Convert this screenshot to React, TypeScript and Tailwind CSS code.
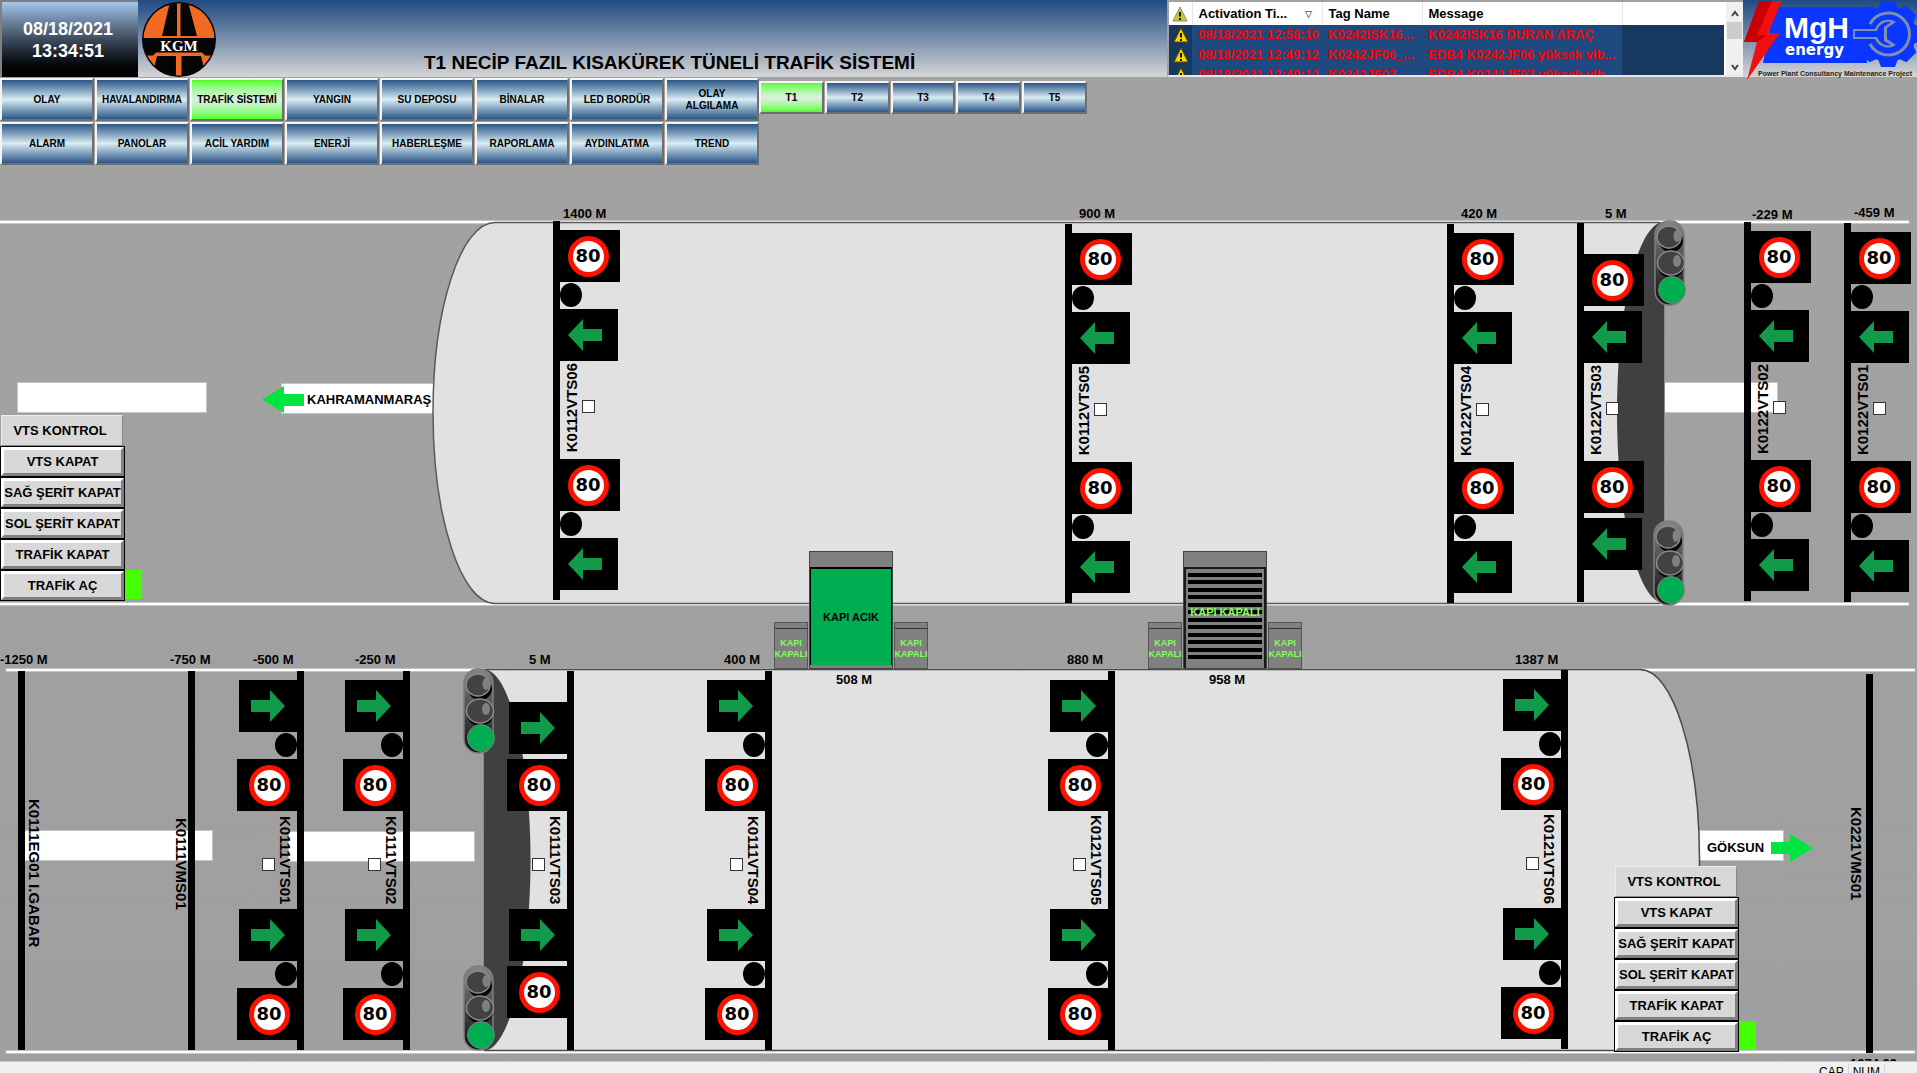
import type { ReactNode } from "react";

type Direction = "left" | "right";

interface IGantry {
  tag: string;
  x: number;
  y: number;
  portal?: boolean;
}

const menuItems = [
  "OLAY", "HAVALANDIRMA", "TRAFİK SİSTEMİ", "YANGIN", "SU DEPOSU", "BİNALAR", "LED BORDÜR", "OLAY ALGILAMA",
  "ALARM", "PANOLAR", "ACİL YARDIM", "ENERJİ", "HABERLEŞME", "RAPORLAMA", "AYDINLATMA", "TREND",
];

const tunnels = ["T1", "T2", "T3", "T4", "T5"];

const alarms = [
  { time: "08/18/2021 12:58:10", tag: "K0242ISK16...", message: "K0242ISK16 DURAN ARAÇ" },
  { time: "08/18/2021 12:49:12", tag: "K0242JF06_...", message: "EDB4 K0242JF06 yüksek vib..." },
  { time: "08/18/2021 12:49:12", tag: "K0242JF07_...", message: "EDB4 K0242JF07 yüksek vib..." },
];

// x / y are the top left corner on the map
const leftboundGantries: IGantry[] = [
  { tag: "K0112VTS06", x: 553, y: 56 },
  { tag: "K0112VTS05", x: 1065, y: 59 },
  { tag: "K0122VTS04", x: 1447, y: 59 },
  { tag: "K0122VTS03", x: 1577, y: 58, portal: true },
  { tag: "K0122VTS02", x: 1744, y: 57 },
  { tag: "K0122VTS01", x: 1844, y: 58 },
];

const rightboundGantries: IGantry[] = [
  { tag: "K0111VTS01", x: 237, y: 506 },
  { tag: "K0111VTS02", x: 343, y: 506 },
  { tag: "K0111VTS03", x: 507, y: 506, portal: true },
  { tag: "K0111VTS04", x: 705, y: 506 },
  { tag: "K0121VTS05", x: 1048, y: 506 },
  { tag: "K0121VTS06", x: 1501, y: 505 },
];

const distances = [
  { text: "1400 M", x: 563, y: 41 },
  { text: "900 M", x: 1079, y: 41 },
  { text: "420 M", x: 1461, y: 41 },
  { text: "5 M", x: 1605, y: 41 },
  { text: "-229 M", x: 1752, y: 42 },
  { text: "-459 M", x: 1854, y: 40 },
  { text: "-1250 M", x: 0, y: 487 },
  { text: "-750 M", x: 170, y: 487 },
  { text: "-500 M", x: 253, y: 487 },
  { text: "-250 M", x: 355, y: 487 },
  { text: "5 M", x: 529, y: 487 },
  { text: "400 M", x: 724, y: 487 },
  { text: "880 M", x: 1067, y: 487 },
  { text: "1387 M", x: 1515, y: 487 },
  { text: "508 M", x: 836, y: 507 },
  { text: "958 M", x: 1209, y: 507 },
];

const vtsCommands = ["VTS KAPAT", "SAĞ ŞERİT KAPAT", "SOL ŞERİT KAPAT", "TRAFİK KAPAT", "TRAFİK AÇ"];

function Pin({ x, y, children }: { x: number; y: number; children: ReactNode }) {
  return (
    <div className="absolute" style={{ left: x, top: y }}>
      {children}
    </div>
  );
}

function KgmLogo() {
  return (
    <svg viewBox="0 0 74 75" className="ml-1 mt-0.5 h-[75px] w-[74px] shrink-0" role="img" aria-label="KGM">
      <defs>
        <clipPath id="kgm">
          <ellipse cx="37" cy="37.500" rx="35.500" ry="36" />
        </clipPath>
      </defs>
      <ellipse cx="37" cy="37.500" rx="37" ry="37.500" fill="#050505" />
      <g clipPath="url(#kgm)">
        <rect width="74" height="36" fill="#f26a22" />
        <path d="M28 0H46L55 34H20Z" fill="#050505" />
        <rect x="35" width="3.500" height="35" fill="#f26a22" />
        <path d="M14 50.500H60L63 53.500H74L62 66L59 54H15L12 66L0 53.500H11Z" fill="#f26a22" />
        <rect x="34" y="51" width="5.500" height="24" fill="#f26a22" />
      </g>
      <text x="37" y="49" textAnchor="middle" fill="#fff" fontSize="15" fontWeight="700" fontFamily="'Liberation Serif', serif">
        KGM
      </text>
    </svg>
  );
}

function MghLogo() {
  const teeth = [0, 45, 90, 135, 180, 225, 270, 315];
  return (
    <svg viewBox="0 0 174 81" className="h-[81px] w-[174px] shrink-0" role="img" aria-label="MgH energy">
      <path d="M31 7H124V63H20Z" fill="#0a36ff" />
      <g fill="#0a36ff">
        <circle cx="145" cy="34" r="28" />
        {teeth.map((angle) => (
          <path key={angle} d="M135 9L138 1H152L155 9Z" transform={`rotate(${angle} 145 34)`} />
        ))}
      </g>
      <path d="M127 24A21 21 0 1 1 127 44" fill="none" stroke="#7e8fb0" strokeWidth="3" />
      <path d="M110 29H132A14 14 0 0 1 153 22L144 28V39L153 45A14 14 0 0 1 132 39H110Z" fill="#7e8fb0" />
      <path d="M112 31H134A12 12 0 0 1 148 22L141 27V41L148 45A12 12 0 0 1 134 37H112Z" fill="#0a36ff" />
      <path d="M16 1H39L25 33H37L4 80L14 42H1Z" fill="#f01010" />
      <path d="M16 1H29L14 35H24L14 42H1Z" fill="#c80000" />
      <text x="41" y="38" fontSize="30" fontWeight="700" fill="#fff" fontFamily="'Liberation Sans', sans-serif">MgH</text>
      <text x="42" y="55" fontSize="15" fontWeight="700" fill="#fff" fontFamily="'DejaVu Sans', sans-serif">energy</text>
      <text x="15" y="76" fontSize="7" fontWeight="700" fill="#222" fontFamily="'Liberation Sans', sans-serif">
        Power Plant Consultancy Maintenance Project
      </text>
    </svg>
  );
}

function WarningIcon({ dim = false }: { dim?: boolean }) {
  return (
    <svg viewBox="0 0 16 16" className="mx-auto block size-4">
      <path d="M8 1L15 15H1Z" fill={dim ? "#c9cc1e" : "#ffd500"} stroke={dim ? "#8a8a8a" : "#5a4a00"} />
      <path d="M8 6V10.500M8 12V14" stroke="#111" strokeWidth="2" />
    </svg>
  );
}

function AlarmList() {
  return (
    <div className="flex h-[77px] w-[576px] shrink-0 border-2 border-r-0 border-[#a0a0a0] border-b-[#e8e8e8] bg-[#17385f]">
      <div className="min-w-0 flex-1 overflow-hidden">
        <table className="w-full table-fixed border-collapse text-left text-[13px] leading-5">
          <colgroup>
            <col className="w-[23px]" />
            <col className="w-[130px]" />
            <col className="w-[100px]" />
            <col className="w-[200px]" />
            <col />
          </colgroup>
          <thead>
            <tr className="h-[23px] bg-white text-black">
              <th className="border-r border-gray-200"><WarningIcon dim /></th>
              <th className="whitespace-nowrap border-r border-gray-200 px-1.5 font-bold">
                <span className="flex justify-between pr-1">
                  Activation Ti...
                  <span className="text-[9px] text-gray-500">▽</span>
                </span>
              </th>
              <th className="border-r border-gray-200 px-1.5 font-bold">Tag Name</th>
              <th className="border-r border-gray-200 px-1.5 font-bold">Message</th>
              <th></th>
            </tr>
          </thead>
          <tbody>
            {alarms.map((alarm) => (
              <tr key={alarm.tag} className="h-5 whitespace-nowrap text-[#ff0000]">
                <td><WarningIcon /></td>
                <td className="bg-[#1f4a7f] px-1.5 font-bold">{alarm.time}</td>
                <td className="bg-[#1f4a7f] px-1.5 font-bold">{alarm.tag}</td>
                <td className="bg-[#1f4a7f] px-1.5 font-bold">{alarm.message}</td>
                <td></td>
              </tr>
            ))}
          </tbody>
        </table>
      </div>
      <div className="flex w-[19px] flex-col items-center border-l-2 border-white bg-[#f0f0f0] py-1">
        <svg viewBox="0 0 8 8" className="mt-1 size-2"><path d="M1 6L4 2L7 6" fill="none" stroke="#444" strokeWidth="2" /></svg>
        <div className="mt-1 h-[17px] w-[15px] bg-[#cdcdcd]" />
        <svg viewBox="0 0 8 8" className="mt-auto size-2"><path d="M1 2L4 6L7 2" fill="none" stroke="#444" strokeWidth="2" /></svg>
      </div>
    </div>
  );
}

function Header() {
  return (
    <header className="flex h-[77px] bg-linear-to-b from-[#204a80] to-[#d6d6d6]">
      <div className="flex w-[138px] shrink-0 flex-col items-center justify-center border-l-2 border-t-2 border-[#808080] bg-linear-to-b from-[#a5c6ee] to-black pr-1 text-lg font-bold leading-[22px] text-white">
        <span>08/18/2021</span>
        <span>13:34:51</span>
      </div>
      <KgmLogo />
      <h1 className="flex-1 whitespace-nowrap pl-[208px] pt-[51px] text-[19px] font-bold leading-6">
        T1 NECİP FAZIL KISAKÜREK TÜNELİ TRAFİK SİSTEMİ
      </h1>
      <AlarmList />
      <MghLogo />
    </header>
  );
}

function NavButton({ label, active }: { label: string; active: boolean }) {
  return (
    <button
      type="button"
      className={
        "flex h-full w-full items-center justify-center border-2 border-b-[#6e6e6e] border-l-[#f4f4f4] border-r-[#6e6e6e] border-t-[#f4f4f4] bg-linear-to-b text-center text-[10px] font-bold leading-3 " +
        (active ? "from-[#4dff0f] via-[#dcefe2] to-[#4dff0f]" : "from-[#2c5788] via-[#d9edf2] to-[#2c5788]") +
        (label === "OLAY ALGILAMA" ? " px-3" : "")
      }
    >
      {label}
    </button>
  );
}

function Navigation() {
  return (
    <nav className="flex h-[88px] items-start pt-px">
      <div className="grid w-[759px] auto-rows-[43px] grid-cols-8 gap-px">
        {menuItems.map((item) => (
          <NavButton key={item} label={item} active={item === "TRAFİK SİSTEMİ"} />
        ))}
      </div>
      <div className="mt-[3px] grid w-[328px] auto-rows-[33px] grid-cols-5 gap-px">
        {tunnels.map((tunnel) => (
          <NavButton key={tunnel} label={tunnel} active={tunnel === "T1"} />
        ))}
      </div>
    </nav>
  );
}

function SpeedSign({ direction }: { direction: Direction }) {
  return (
    <div
      className={
        "flex h-[52px] w-[60px] items-center justify-center bg-black " + (direction === "left" ? "pr-1" : "pl-1")
      }
    >
      <div className="flex size-[41px] items-center justify-center rounded-full border-[5px] border-[#ff1100] bg-white font-['DejaVu_Sans',sans-serif] text-lg font-bold leading-none">
        80
      </div>
    </div>
  );
}

function LaneArrow({ direction }: { direction: Direction }) {
  return (
    <div
      className={
        "flex h-[52px] w-[58px] items-center bg-black " + (direction === "left" ? "pl-2" : "justify-end pr-3")
      }
    >
      <svg viewBox="0 0 34 32" className={direction === "left" ? "h-8 w-[34px]" : "h-8 w-[34px] -scale-x-100"}>
        <path d="M0 16L15 0V10H34V22H15V32Z" fill="#119a49" />
      </svg>
    </div>
  );
}

function Gantry({ gantry, direction }: { gantry: IGantry; direction: Direction }) {
  const isLeft = direction === "left";
  const gap = gantry.portal ? (
    <div className="h-[5px]" />
  ) : (
    <div className="h-[27px] py-px">
      <div className="h-6 w-[22px] rounded-[50%] bg-black" />
    </div>
  );
  const lane = (
    <>
      {isLeft ? <SpeedSign direction={direction} /> : <LaneArrow direction={direction} />}
      {gap}
      {isLeft ? <LaneArrow direction={direction} /> : <SpeedSign direction={direction} />}
    </>
  );

  return (
    <div className={isLeft ? "flex h-[379px]" : "flex h-[379px] flex-row-reverse"}>
      <div className="w-[7px] bg-black" />
      <div
        className={
          "flex flex-col " + (isLeft ? "items-start " : "items-end ") + (gantry.portal ? "pt-[31px]" : "pt-[9px]")
        }
      >
        {lane}
        <div className={isLeft ? "flex h-[98px] items-center gap-0.5 pb-1 pl-1" : "flex h-[98px] flex-row-reverse items-center gap-0.5 pr-1"}>
          <label
            htmlFor={gantry.tag}
            className={
              "whitespace-nowrap text-[15px] font-bold leading-4 [writing-mode:vertical-rl] " + (isLeft ? "rotate-180" : "")
            }
          >
            {gantry.tag}
          </label>
          <input
            id={gantry.tag}
            type="checkbox"
            className={"size-[13px] appearance-none border border-[#333] bg-white " + (isLeft ? "mb-1" : "mt-2")}
          />
        </div>
        {lane}
      </div>
    </div>
  );
}

function TrafficLight() {
  return (
    <svg viewBox="0 0 32 86" className="block h-[86px] w-8">
      <defs>
        <linearGradient id="housing" x1="0" x2="0" y1="0" y2="1">
          <stop offset="0" stopColor="#858585" />
          <stop offset="0.500" stopColor="#4a4a4a" />
          <stop offset="1" stopColor="#0c0c0c" />
        </linearGradient>
      </defs>
      <rect x="1" y="1" width="29" height="84" rx="14" fill="url(#housing)" stroke="#7d7d7d" strokeWidth="1.500" />
      <ellipse cx="17" cy="21" rx="12" ry="11" fill="#050505" />
      <ellipse cx="15" cy="17" rx="12" ry="11" fill="#424242" stroke="#8c8c8c" strokeWidth="1.500" />
      <ellipse cx="23" cy="16" rx="3.500" ry="6" fill="#808080" />
      <ellipse cx="17" cy="47" rx="13" ry="11" fill="#050505" />
      <ellipse cx="17" cy="43" rx="13.500" ry="12" fill="#424242" stroke="#8c8c8c" strokeWidth="1.500" />
      <ellipse cx="23" cy="41" rx="4" ry="6" fill="#808080" />
      <circle cx="18" cy="70" r="13.500" fill="#00ae52" stroke="#7d7d7d" />
    </svg>
  );
}

function SideDoor() {
  return (
    <div className="flex h-[47px] w-[34px] flex-col border border-[#555] bg-[#808080]">
      <div className="h-1.5 shrink-0 border-b border-[#333]" />
      <div className="flex flex-1 flex-col items-center justify-center text-center text-[9px] font-bold leading-[11px] text-[#80ff55]">
        <span>KAPI</span>
        <span>KAPALI</span>
      </div>
    </div>
  );
}

function CrossPassage({ open }: { open: boolean }) {
  return (
    <div className="flex items-end gap-px">
      <SideDoor />
      <div className="flex h-[118px] w-[84px] flex-col border border-[#444] bg-[#808080]">
        <div className="h-[15px] shrink-0" />
        {open ? (
          <div className="mb-[3px] flex flex-1 items-center justify-center border-x border-t-2 border-black bg-[#00ae52] text-[11px] font-bold">
            KAPI ACIK
          </div>
        ) : (
          <div className="flex flex-1 border-x-2 border-t-2 border-[#1a1a1a] px-0.5 pb-2 pt-1">
            <div className="flex w-full items-center justify-center whitespace-nowrap bg-[repeating-linear-gradient(to_bottom,#000_0px,#000_4px,#808080_4px,#808080_7px,#000_7px,#000_11px,#808080_11px,#808080_15px)] pb-2 text-[11px] font-bold text-[#80ff55]">
              KAPI KAPALI
            </div>
          </div>
        )}
      </div>
      <SideDoor />
    </div>
  );
}

function VtsPanel() {
  return (
    <section className="flex w-[142px] flex-col text-[13px] font-bold leading-4">
      <h2 className="ml-px flex h-[31px] w-[122px] items-center justify-center border border-b-[#888] border-l-[#eee] border-r-[#888] border-t-[#eee] bg-[#d8d8d8] pr-1">
        VTS KONTROL
      </h2>
      {vtsCommands.map((command) => (
        <div key={command} className="flex h-[31px]">
          <button type="button" className="h-[31px] w-[125px] shrink-0 border border-black">
            <span className="flex h-full items-center justify-center whitespace-nowrap border-[3px] border-b-[#808080] border-l-white border-r-[#808080] border-t-white bg-[#d8d8d8]">
              {command}
            </span>
          </button>
          {command === "TRAFİK AÇ" && <div className="h-[29px] flex-1 bg-[#44ff00]" />}
        </div>
      ))}
    </section>
  );
}

// Roadways, tubes and portals drawn under the gantries
function Roadways() {
  return (
    <svg viewBox="0 0 1917 896" className="absolute left-0 top-0 h-[896px] w-[1917px]">
      <g stroke="#c4c4c4" fill="#fff">
        <rect x="-2" y="55.500" width="1911" height="3" />
        <rect x="-2" y="437.500" width="1911" height="3" />
        <rect x="6" y="503.500" width="1909" height="3" />
        <rect x="6" y="885.500" width="1909" height="3" />
        <rect x="17.500" y="217.500" width="189" height="30" />
        <rect x="281.500" y="218.500" width="160" height="30" />
        <rect x="1660.500" y="217.500" width="117" height="30" />
        <rect x="18.500" y="665.500" width="194" height="30" />
        <rect x="288.500" y="666.500" width="186" height="30" />
        <rect x="1690.500" y="665.500" width="93" height="30" />
      </g>
      <path d="M495 57H1664V438H495C461 438 433 353 433 247.500S461 57 495 57Z" fill="#e1e1e1" />
      <path d="M1660 57.500H495C461 57.500 433 142 433 247.500S461 438.500 495 438.500H1660" fill="none" stroke="#5a5a5a" strokeWidth="1.500" />
      <path d="M1664 57C1638 57 1617 142 1617 247.500S1638 438 1664 438Z" fill="#404040" />
      <path d="M1664.500 57V438" stroke="#8a8a8a" />
      <path d="M484 504.500H1640C1673 504.500 1699.500 590 1699.500 695S1673 885.500 1640 885.500H484Z" fill="#e1e1e1" />
      <path d="M484 504.500H1640C1673 504.500 1699.500 590 1699.500 695S1673 885.500 1640 885.500H484" fill="none" stroke="#4a4a4a" strokeWidth="1.500" />
      <path d="M484 504.500C509 504.500 530.500 590 530.500 695S509 885.500 484 885.500Z" fill="#404040" />
      <path d="M483.500 505V885" stroke="#8a8a8a" />
      <path d="M262 234.500L284 221V229H304V241H284V248Z" fill="#00e540" />
      <path d="M1813 683L1790 669V677H1771V689H1790V697Z" fill="#00e540" />
      <path d="M18 506H25V885H18ZM188 506H195V885H188ZM1866 509H1873V888H1866Z" fill="#000" />
    </svg>
  );
}

function TunnelMap() {
  return (
    <main className="relative h-[896px] overflow-hidden bg-linear-to-b from-[#a2a2a2] to-[#9f9f9f]">
      <Roadways />
      {distances.map((distance) => (
        <Pin key={distance.text + distance.x} x={distance.x} y={distance.y}>
          <span className="block whitespace-nowrap text-[13px] font-bold leading-4">{distance.text}</span>
        </Pin>
      ))}
      {leftboundGantries.map((gantry) => (
        <Pin key={gantry.tag} x={gantry.x} y={gantry.y}>
          <Gantry gantry={gantry} direction="left" />
        </Pin>
      ))}
      {rightboundGantries.map((gantry) => (
        <Pin key={gantry.tag} x={gantry.x} y={gantry.y}>
          <div className="flex w-[67px] justify-end">
            <Gantry gantry={gantry} direction="right" />
          </div>
        </Pin>
      ))}
      <Pin x={307} y={227}>
        <span className="block text-[13px] font-bold leading-4">KAHRAMANMARAŞ</span>
      </Pin>
      <Pin x={1707} y={675}>
        <span className="block text-[13px] font-bold leading-4">GÖKSUN</span>
      </Pin>
      <Pin x={26} y={634}>
        <span className="block whitespace-nowrap text-[15px] font-bold leading-4 [writing-mode:vertical-rl]">K0111EG01 I.GABAR</span>
      </Pin>
      <Pin x={173} y={653}>
        <span className="block text-[15px] font-bold leading-4 [writing-mode:vertical-rl]">K0111VMS01</span>
      </Pin>
      <Pin x={1848} y={642}>
        <span className="block text-[15px] font-bold leading-4 [writing-mode:vertical-rl]">K0221VMS01</span>
      </Pin>
      <Pin x={1850} y={893}>
        <span className="block whitespace-nowrap text-[13px] font-bold leading-3">1274,29</span>
      </Pin>
      <Pin x={1654} y={55}><TrafficLight /></Pin>
      <Pin x={1653} y={355}><TrafficLight /></Pin>
      <Pin x={463} y={503}><TrafficLight /></Pin>
      <Pin x={463} y={800}><TrafficLight /></Pin>
      <Pin x={774} y={386}><CrossPassage open /></Pin>
      <Pin x={1148} y={386}><CrossPassage open={false} /></Pin>
      <Pin x={0} y={250}><VtsPanel /></Pin>
      <Pin x={1614} y={701}><VtsPanel /></Pin>
    </main>
  );
}

export default function App() {
  return (
    <div className="flex min-h-screen flex-col overflow-hidden bg-[#a2a2a2] font-['Liberation_Sans',Arial,sans-serif] text-black">
      <Header />
      <Navigation />
      <TunnelMap />
      <footer className="flex h-3 justify-end overflow-hidden border-t border-[#c8c8c8] bg-[#f0f0f0] pr-8 pt-0.5 text-xs leading-4">
        <span className="h-4 border-r border-gray-300 px-1">CAP</span>
        <span className="h-4 border-r border-gray-300 px-1">NUM</span>
      </footer>
    </div>
  );
}
